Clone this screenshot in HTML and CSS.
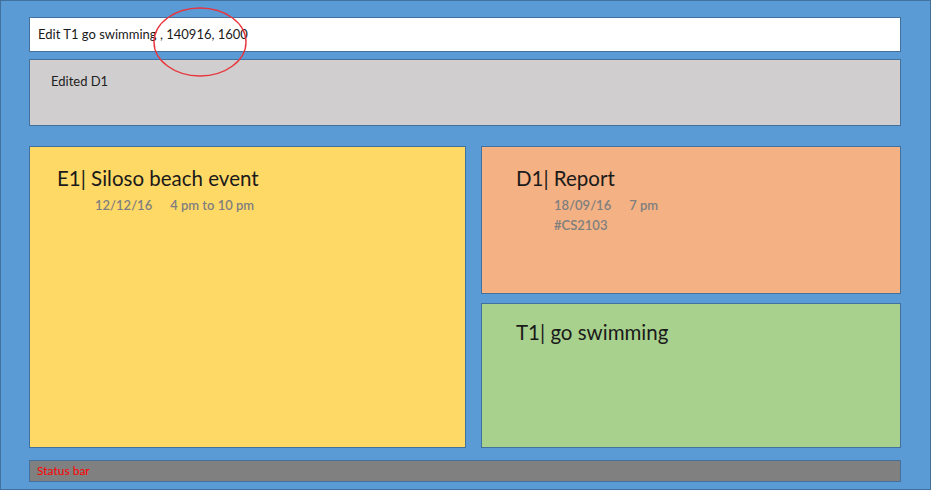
FILE: index.html
```html
<!DOCTYPE html>
<html>
<head>
<meta charset="utf-8">
<link rel="stylesheet" href="styles.css">
</head>
<body>
<div class="app">
  <div class="command">Edit T1 go swimming , 140916, 1600</div>
  <div class="feedback">Edited D1</div>
  <div class="board">
    <div class="card event">
      <div class="title">E1| Siloso beach event</div>
      <div class="meta first"><span class="date">12/12/16</span><span>4 pm to 10 pm</span></div>
    </div>
    <div class="side">
      <div class="card deadline">
        <div class="title">D1| Report</div>
        <div class="meta first"><span class="date">18/09/16</span><span>7 pm</span></div>
        <div class="meta tag">#CS2103</div>
      </div>
      <div class="card todo">
        <div class="title">T1| go swimming</div>
      </div>
    </div>
  </div>
  <div class="status">Status bar</div>
  <svg class="circle" width="100" height="76" viewBox="0 0 100 76">
    <ellipse cx="50" cy="38" rx="46" ry="34" fill="none" stroke="#e8343c" stroke-width="1.4"/>
  </svg>
</div>
</body>
</html>
```

FILE: styles.css
```css
html, body {
  margin: 0;
  padding: 0;
  background: #ffffff;
}
body {
  font-family: Lato, "Open Sans", sans-serif;
}
.app {
  position: relative;
  box-sizing: border-box;
  width: 931px;
  height: 490px;
  border: 1px solid #41719c;
  background: #5b9bd5;
  padding: 16px 29px 7px 28px;
  display: flex;
  flex-direction: column;
}
.command {
  box-sizing: border-box;
  height: 35px;
  background: #ffffff;
  border: 1px solid #41719c;
  padding-left: 8px;
  font-size: 13px;
  line-height: 33px;
  color: #1a1a1a;
  margin-bottom: 7px;
}
.feedback {
  box-sizing: border-box;
  height: 67px;
  background: #d0cece;
  border: 1px solid #41719c;
  padding: 13px 0 0 21px;
  font-size: 13px;
  color: #222222;
  margin-bottom: 20px;
}
.board {
  height: 302px;
  display: flex;
  gap: 15px;
}
.side {
  width: 420px;
  display: flex;
  flex-direction: column;
  gap: 9px;
}
.card {
  box-sizing: border-box;
  border: 1px solid #41719c;
}
.event {
  width: 437px;
  background: #ffd966;
  padding: 17px 0 0 27px;
}
.deadline {
  height: 148px;
  background: #f4b183;
  padding: 17px 0 0 34px;
}
.todo {
  flex: 1;
  background: #a9d18e;
  padding: 14px 0 0 34px;
}
.title {
  font-size: 20.5px;
  line-height: 28px;
  color: #1a1a1a;
}
.meta {
  padding-left: 38px;
  font-size: 13px;
  font-weight: 600;
  color: #7f7f7f;
  line-height: 20px;
}
.meta.first {
  margin-top: 3px;
}
.meta .date {
  margin-right: 18px;
}
.status {
  box-sizing: border-box;
  margin-top: 12px;
  height: 22px;
  background: #808080;
  border: 1px solid #41719c;
  padding-left: 7px;
  font-size: 12px;
  line-height: 20px;
  color: #ff0000;
}
.circle {
  position: absolute;
  left: 149px;
  top: 3px;
}
```
